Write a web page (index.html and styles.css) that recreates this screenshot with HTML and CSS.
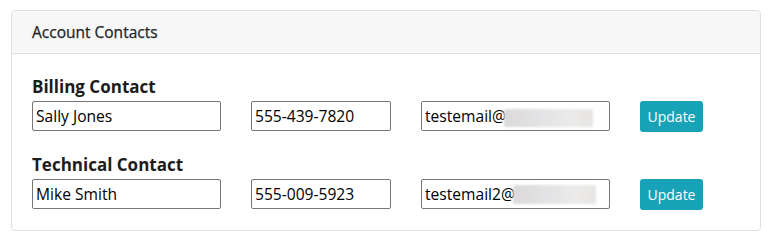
FILE: index.html
```html
<!DOCTYPE html>
<html>
<head>
<meta charset="utf-8">
<link rel="stylesheet" href="styles.css">
</head>
<body>
<div class="card">
  <div class="card-header">Account Contacts</div>
  <div class="card-body">
    <div class="group">
      <div class="label">Billing Contact</div>
      <div class="row">
        <input class="field name" type="text" value="Sally Jones">
        <input class="field phone" type="text" value="555-439-7820">
        <div class="email-wrap">
          <input class="field email" type="text" value="testemail@">
          <span class="blur blur1"></span>
        </div>
        <button class="btn">Update</button>
      </div>
    </div>
    <div class="group">
      <div class="label">Technical Contact</div>
      <div class="row">
        <input class="field name" type="text" value="Mike Smith">
        <input class="field phone" type="text" value="555-009-5923">
        <div class="email-wrap">
          <input class="field email" type="text" value="testemail2@">
          <span class="blur blur2"></span>
        </div>
        <button class="btn">Update</button>
      </div>
    </div>
  </div>
</div>
</body>
</html>
```
FILE: styles.css
```css
html, body {
  margin: 0;
  background: #fff;
}
body {
  padding: 10px 12px 0 11px;
  font-family: "Open Sans", "Noto Sans", sans-serif;
  color: #212529;
}
.card {
  border: 1px solid #dfdfdf;
  border-radius: 4px;
  height: 219px;
  overflow: hidden;
}
.card-header {
  background: #f7f7f7;
  border-bottom: 1px solid #dfdfdf;
  height: 43px;
  box-sizing: border-box;
  padding: 0 20px;
  display: flex;
  align-items: center;
  font-size: 15.5px;
  color: #222;
  -webkit-text-stroke: 0.25px #222;
}
.card-body {
  padding: 22px 20px 0 20px;
}
.group + .group {
  margin-top: 22px;
}
.label {
  font-size: 17px;
  font-weight: 700;
  line-height: 22px;
  margin-bottom: 3px;
  color: #1c1c1c;
}
.row {
  display: flex;
  align-items: flex-start;
  gap: 30px;
}
.field {
  box-sizing: border-box;
  height: 30px;
  border: 1px solid #767676;
  border-radius: 2px;
  padding: 0 3px;
  font-family: "Open Sans", "Noto Sans", sans-serif;
  font-size: 15.6px;
  color: #000;
  background: #fff;
  margin: 0;
  outline: none;
}
.name { width: 189px; }
.phone { width: 140px; }
.email { width: 189px; }
.email-wrap {
  position: relative;
  width: 189px;
  height: 30px;
}
.blur {
  position: absolute;
  border-radius: 2px;
  background: linear-gradient(90deg, #dcdadb 0%, #e4e3e5 45%, #ecebea 75%, #e6e5e4 100%);
  filter: blur(1px);
}
.blur1 { left: 83px; top: 8px; width: 89px; height: 18px; }
.blur2 { left: 92px; top: 6px; width: 83px; height: 19px; }
.btn {
  box-sizing: border-box;
  width: 63px;
  height: 31px;
  border: none;
  border-radius: 3px;
  background: #17a2b8;
  color: #fff;
  font-family: "Open Sans", "Noto Sans", sans-serif;
  font-size: 14px;
  padding: 0;
  margin: 0;
}
```
